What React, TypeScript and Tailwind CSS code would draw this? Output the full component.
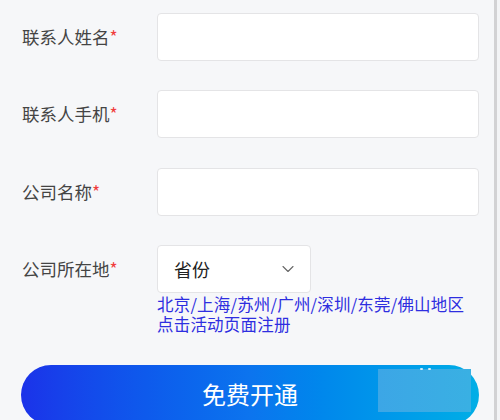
import { ChevronDown } from "lucide-react";

const font = { fontFamily: '"Noto Sans CJK SC", "Noto Sans", sans-serif' };

function Label({ text }: { text: string }) {
  return (
    <div className="w-[135px] shrink-0 text-[17.5px] text-[#444]">
      {text}
      <span className="text-[#f03c3c]">*</span>
    </div>
  );
}

function Field({ label }: { label: string }) {
  return (
    <div className="flex items-center">
      <Label text={label} />
      <input
        type="text"
        className="h-[48px] w-[322px] rounded-[4px] border border-[#e4e4e6] bg-white outline-none"
      />
    </div>
  );
}

export default function App() {
  return (
    <div className="flex h-[420px] w-[500px] overflow-hidden bg-[#f6f7f9]" style={font}>
      <div className="relative w-[494px] shrink-0 pl-[22px] pt-[13px]">
        <div className="flex flex-col gap-[29px]">
          <Field label="联系人姓名" />
          <Field label="联系人手机" />
          <div className="mt-[1px]">
            <Field label="公司名称" />
          </div>
          <div className="flex items-start">
            <div className="flex h-[48px] items-center">
              <Label text="公司所在地" />
            </div>
            <div className="flex flex-col">
              <div className="flex h-[48px] w-[154px] items-center justify-between rounded-[4px] border border-[#e4e4e6] bg-white pl-[16px] pr-[12px]">
                <span className="text-[18px] text-[#222]">省份</span>
                <ChevronDown size={20} strokeWidth={1.3} className="text-[#666]" />
              </div>
              <div className="mt-[1px] whitespace-nowrap text-[16.5px] leading-[20px] tracking-[0.2px] text-[#2e2ee0]">
                <div>北京/上海/苏州/广州/深圳/东莞/佛山地区</div>
                <div>点击活动页面注册</div>
              </div>
            </div>
          </div>
        </div>
        <button className="mt-[31px] flex h-[60px] w-[458px] -translate-x-[1px] items-center justify-center rounded-full bg-gradient-to-r from-[#1b32e9] via-[#0c74ee] to-[#03aee6] pb-[2px] text-[24px] text-white">
          免费开通
        </button>
        <div className="absolute left-[378px] top-[369px] h-[43px] w-[93px] bg-gradient-to-r from-[#3ca6e6] to-[#39b0e3]">
          <div className="absolute left-[42px] top-[-1px] flex gap-[5px]">
            <span className="h-[2px] w-[3px] rounded-full bg-white/80" />
            <span className="h-[2px] w-[3px] rounded-full bg-white/80" />
          </div>
        </div>
      </div>
      <div className="w-[3px] bg-[#d2d2d4]" />
      <div className="flex-1 bg-[#f3f4f6]" />
    </div>
  );
}
